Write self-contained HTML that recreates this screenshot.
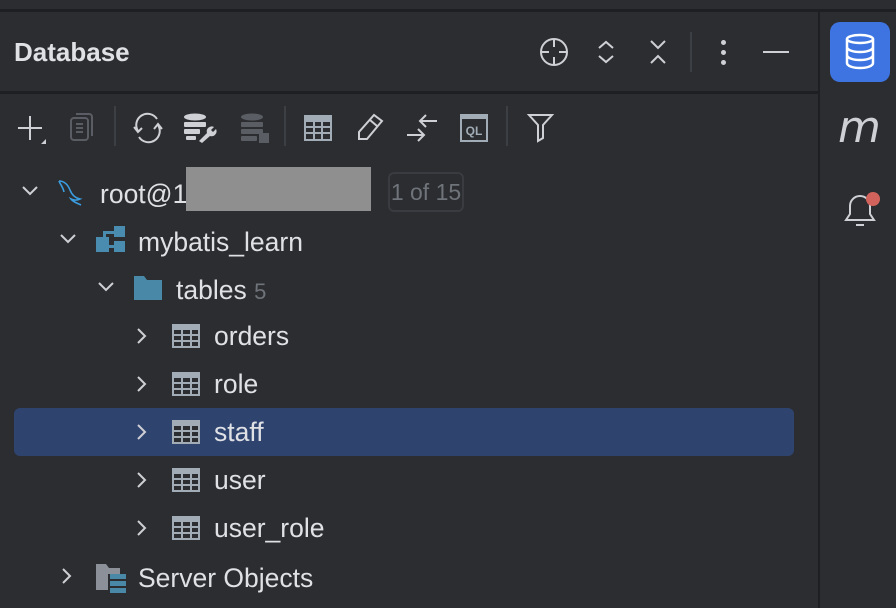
<!DOCTYPE html>
<html><head><style>
body{margin:0;width:896px;height:608px;background:#2b2d30;overflow:hidden;font-family:"Liberation Sans",sans-serif;position:relative}
.a{position:absolute}
.t{position:absolute;color:#dfe1e5;font-size:26.5px;line-height:28px}
svg{position:absolute;overflow:visible}
</style></head><body>
<div class="a" style="left:0;top:9px;width:896px;height:3px;background:#1e1f22"></div>
<div class="a" style="left:0;top:91px;width:818px;height:3px;background:#1e1f22"></div>
<div class="a" style="left:818px;top:10px;width:2px;height:598px;background:#1e1f22"></div>
<div class="t" style="left:14px;top:38px;font-weight:bold;font-size:26px">Database</div>
<!-- header icons -->
<svg style="left:540px;top:38px" width="28" height="28" fill="none" stroke="#ced0d6" stroke-width="2"><circle cx="14" cy="14" r="13"/><path d="M14 1v8M14 19v8M1 14h8M19 14h8"/></svg>
<svg style="left:597px;top:40px" width="18" height="24" fill="none" stroke="#ced0d6" stroke-width="2"><path d="M2 8l7-6 7 6M2 16l7 6 7-6"/></svg>
<svg style="left:649px;top:40px" width="18" height="24" fill="none" stroke="#ced0d6" stroke-width="2"><path d="M2 1l7 7 7-7M2 23l7-7 7 7"/></svg>
<div class="a" style="left:690px;top:32px;width:2px;height:40px;background:#3c3f44"></div>
<div class="a" style="left:721px;top:40px;width:5px;height:5px;border-radius:3px;background:#ced0d6"></div>
<div class="a" style="left:721px;top:50px;width:5px;height:5px;border-radius:3px;background:#ced0d6"></div>
<div class="a" style="left:721px;top:60px;width:5px;height:5px;border-radius:3px;background:#ced0d6"></div>
<div class="a" style="left:763px;top:51px;width:26px;height:2px;background:#ced0d6"></div>
<!-- sidebar -->
<div class="a" style="left:830px;top:22px;width:60px;height:60px;border-radius:10px;background:#3d74e2"></div>
<svg style="left:845px;top:34px" width="30" height="36" fill="none" stroke="#fff" stroke-width="2.5"><ellipse cx="15" cy="5" rx="13" ry="4"/><path d="M2 5v24c0 3 6 5 13 5s13-2 13-5V5M2 13c0 3 6 5 13 5s13-2 13-5M2 21c0 3 6 5 13 5s13-2 13-5"/></svg>
<div class="a" style="left:838px;top:106px;color:#ced0d6;font-size:44px;font-style:italic;font-family:'DejaVu Sans',sans-serif;line-height:44px">m</div>
<svg style="left:843px;top:192px" width="34" height="38" fill="none" stroke="#ced0d6" stroke-width="2"><path d="M3 28h28l-4-6V14a10 10 0 0 0-20 0v8z"/><path d="M13 33h8"/></svg>
<div class="a" style="left:866px;top:192px;width:14px;height:14px;border-radius:7px;background:#d2635c"></div>
<!-- toolbar -->
<svg style="left:18px;top:114px" width="34" height="30" fill="none" stroke="#ced0d6" stroke-width="2"><path d="M12 2v24M0 14h24"/><path d="M28 25v5h-5z" fill="#ced0d6" stroke="none"/></svg>
<svg style="left:70px;top:113px" width="24" height="28" fill="none" stroke="#5a5d63" stroke-width="2"><rect x="1" y="5" width="17" height="22" rx="3"/><path d="M6 1h13a3 3 0 0 1 3 3v19M6 11h7M6 15h7M6 19h7"/></svg>
<div class="a" style="left:114px;top:106px;width:2px;height:40px;background:#3c3f44"></div>
<svg style="left:132px;top:113px" width="32" height="30" fill="none" stroke="#ced0d6" stroke-width="2"><path d="M6 18a11 11 0 0 1 19-12M26 12a11 11 0 0 1-19 12M2 14l4 5 4-4M22 16l4-5 4 5"/></svg>
<svg style="left:183px;top:113px" width="32" height="30"><g fill="#ced0d6"><ellipse cx="12" cy="4" rx="11" ry="3.5"/><rect x="1" y="9" width="22" height="5" rx="1"/><rect x="1" y="16" width="16" height="5" rx="1"/><rect x="3" y="23" width="10" height="4" rx="1"/><path d="M16 28l8-8a5 5 0 0 1 7-6l-3 3 2 2 3-3a5 5 0 0 1-6 7l-8 7z"/></g></svg>
<svg style="left:240px;top:113px" width="32" height="32"><g fill="#5a5d63"><ellipse cx="12" cy="4" rx="11" ry="3.5"/><rect x="1" y="9" width="22" height="5" rx="1"/><rect x="1" y="16" width="22" height="5" rx="1"/><rect x="1" y="23" width="16" height="5" rx="1"/><rect x="19" y="20" width="10" height="10"/></g></svg>
<div class="a" style="left:284px;top:106px;width:2px;height:40px;background:#3c3f44"></div>
<svg style="left:304px;top:115px" width="28" height="26"><rect width="28" height="26" fill="#a1acb7"/><g fill="#2b2d30"><rect x="2" y="7" width="7" height="4"/><rect x="11" y="7" width="6" height="4"/><rect x="19" y="7" width="7" height="4"/><rect x="2" y="13" width="7" height="4"/><rect x="11" y="13" width="6" height="4"/><rect x="19" y="13" width="7" height="4"/><rect x="2" y="19" width="7" height="5"/><rect x="11" y="19" width="6" height="5"/><rect x="19" y="19" width="7" height="5"/></g></svg>
<svg style="left:358px;top:114px" width="26" height="26" fill="none" stroke="#ced0d6" stroke-width="2"><path d="M1 25v-7l15-17 8 6-15 18z M12 6l7 6"/></svg>
<svg style="left:406px;top:113px" width="32" height="30" fill="none" stroke="#ced0d6" stroke-width="2"><path d="M14 8h17M20 2l-6 6 6 6M1 22h17M12 16l6 6-6 6"/></svg>
<svg style="left:460px;top:114px" width="28" height="28"><rect width="28" height="28" fill="#a1acb7"/><rect x="2" y="5" width="24" height="21" fill="#2b2d30"/><text x="14" y="21" text-anchor="middle" font-size="12" font-weight="bold" fill="#a1acb7" font-family="Liberation Sans">QL</text></svg>
<div class="a" style="left:506px;top:106px;width:2px;height:40px;background:#3c3f44"></div>
<svg style="left:528px;top:114px" width="26" height="26" fill="none" stroke="#ced0d6" stroke-width="2"><path d="M1 1h23l-9 10v13l-5 3V11z"/></svg>
<!-- tree -->
<svg style="left:22px;top:186px" width="16" height="10" fill="none" stroke="#ced0d6" stroke-width="2"><path d="M1 1l7 7 7-7"/></svg>
<svg style="left:56px;top:178px" width="30" height="30" fill="none" stroke="#3b9cdf" stroke-width="1.6"><path d="M3 3c6 0 9 4 11 9s5 8 10 9c-2 1-5 2-9 0 2 3 6 4 10 6M3 3c1 3 4 6 5 11"/></svg>
<div class="t" style="left:100px;top:180px">root@1</div>
<div class="a" style="left:186px;top:167px;width:185px;height:44px;background:#8f8f8f"></div>
<div class="a" style="left:388px;top:172px;width:76px;height:40px;border:2px solid #393b40;border-radius:6px;box-sizing:border-box;color:#6f737a;font-size:23px;line-height:36px;text-align:center">1 of 15</div>
<svg style="left:60px;top:234px" width="16" height="10" fill="none" stroke="#ced0d6" stroke-width="2"><path d="M1 1l7 7 7-7"/></svg>
<svg style="left:96px;top:226px" width="30" height="26"><g fill="#4a8bb0"><rect x="0" y="11" width="13" height="15"/><rect x="18" y="0" width="11" height="11"/><rect x="18" y="15" width="11" height="11"/><rect x="7" y="5" width="11" height="3"/><rect x="7" y="5" width="3" height="8"/><rect x="12" y="19" width="7" height="3"/></g></svg>
<div class="t" style="left:138px;top:228px">mybatis_learn</div>
<svg style="left:98px;top:282px" width="16" height="10" fill="none" stroke="#ced0d6" stroke-width="2"><path d="M1 1l7 7 7-7"/></svg>
<svg style="left:134px;top:276px" width="28" height="24"><path d="M0 0h10l3 4h15v20H0z" fill="#4a88a8"/></svg>
<div class="t" style="left:176px;top:276px">tables <span style="color:#6f737a;font-size:22px">5</span></div>
<div class="a" style="left:14px;top:408px;width:780px;height:48px;border-radius:6px;background:#2e436e"></div>
<div id="rows"></div>
<script>
var names=["orders","role","staff","user","user_role"];var h="";
names.forEach(function(n,i){var y=336+i*48;
h+='<svg style="left:137px;top:'+(y-8)+'px" width="10" height="16" fill="none" stroke="#ced0d6" stroke-width="2"><path d="M1 1l7 7-7 7"/></svg>';
h+='<svg style="left:172px;top:'+(y-12)+'px" width="28" height="24"><rect width="28" height="24" fill="#a1acb7"/><g fill="#2b2d30"><rect x="2" y="6" width="7" height="4"/><rect x="11" y="6" width="7" height="4"/><rect x="20" y="6" width="6" height="4"/><rect x="2" y="12" width="7" height="4"/><rect x="11" y="12" width="7" height="4"/><rect x="20" y="12" width="6" height="4"/><rect x="2" y="18" width="7" height="4"/><rect x="11" y="18" width="7" height="4"/><rect x="20" y="18" width="6" height="4"/></g></svg>';
h+='<div class="t" style="left:214px;top:'+(y-14)+'px">'+n+'</div>';});
document.getElementById('rows').outerHTML=h;
</script>
<svg style="left:62px;top:568px" width="10" height="16" fill="none" stroke="#ced0d6" stroke-width="2"><path d="M1 1l7 7-7 7"/></svg>
<svg style="left:96px;top:564px" width="32" height="30"><path d="M0 0h10l3 4h11v6H12v16H0z" fill="#8c9199"/><g fill="#4a88a8"><rect x="14" y="10" width="16" height="5"/><rect x="14" y="17" width="16" height="5"/><rect x="14" y="24" width="16" height="5"/></g></svg>
<div class="t" style="left:138px;top:564px">Server Objects</div>
</body></html>
